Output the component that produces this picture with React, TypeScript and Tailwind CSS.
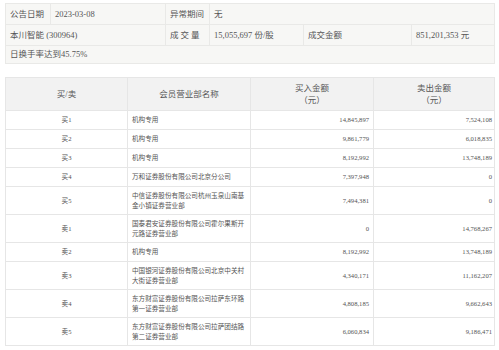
import React from 'react';

type Row = { side: string; name: string[]; buy: string; sell: string };

const rows: Row[] = [
  { side: '买1', name: ['机构专用'], buy: '14,845,897', sell: '7,524,108' },
  { side: '买2', name: ['机构专用'], buy: '9,861,779', sell: '6,018,835' },
  { side: '买3', name: ['机构专用'], buy: '8,192,992', sell: '13,748,189' },
  { side: '买4', name: ['万和证券股份有限公司北京分公司'], buy: '7,397,948', sell: '0' },
  { side: '买5', name: ['中信证券股份有限公司杭州玉泉山南基', '金小镇证券营业部'], buy: '7,494,381', sell: '0' },
  { side: '卖1', name: ['国泰君安证券股份有限公司霍尔果斯开', '元路证券营业部'], buy: '0', sell: '14,768,267' },
  { side: '卖2', name: ['机构专用'], buy: '8,192,992', sell: '13,748,189' },
  { side: '卖3', name: ['中国银河证券股份有限公司北京中关村', '大街证券营业部'], buy: '4,340,171', sell: '11,162,207' },
  { side: '卖4', name: ['东方财富证券股份有限公司拉萨东环路', '第一证券营业部'], buy: '4,808,185', sell: '9,662,643' },
  { side: '卖5', name: ['东方财富证券股份有限公司拉萨团结路', '第二证券营业部'], buy: '6,060,834', sell: '9,186,471' },
];

const font = { fontFamily: '"Liberation Serif", "Noto Sans CJK SC", serif' };

export default function App() {
  const top = 'border border-[#e9e9e7] px-[4px] text-left align-middle';
  return (
    <div className="w-[499px] h-[350px] bg-white overflow-hidden pt-[3px] px-[5px] text-[#555]" style={font}>
      <table className="table-fixed border-collapse w-[489px] bg-[#f7f7f5] text-[8.5px]">
        <colgroup>
          <col className="w-[45px]" />
          <col className="w-[115px]" />
          <col className="w-[44px]" />
          <col className="w-[94px]" />
          <col className="w-[108px]" />
          <col className="w-[83px]" />
        </colgroup>
        <tbody>
          <tr className="h-[21px]">
            <td className={top}>公告日期</td>
            <td className={top}>2023-03-08</td>
            <td className={top}>异常期间</td>
            <td className={top} colSpan={3}>无</td>
          </tr>
          <tr className="h-[21px]">
            <td className={top} colSpan={2}>本川智能 (300964)</td>
            <td className={`${top} tracking-[2px]`}>成交量</td>
            <td className={`${top} whitespace-nowrap`}>15,055,697 份/股</td>
            <td className={top}>成交金额</td>
            <td className={`${top} whitespace-nowrap`}>851,201,353 元</td>
          </tr>
          <tr className="h-[18px]">
            <td className={top} colSpan={6}>日换手率达到45.75%</td>
          </tr>
        </tbody>
      </table>

      <table className="table-fixed border-collapse w-[489px] mt-[13px] text-[6.6px] text-[#555]">
        <colgroup>
          <col className="w-[122px]" />
          <col className="w-[123px]" />
          <col className="w-[123px]" />
          <col className="w-[121px]" />
        </colgroup>
        <thead>
          <tr className="h-[33px] bg-[#f2f2f2] text-[8.5px] leading-[12px] text-[#555]">
            <th className="border border-[#e6e6e6] font-normal">买/卖</th>
            <th className="border border-[#e6e6e6] font-normal">会员营业部名称</th>
            <th className="border border-[#e6e6e6] font-normal">
              <div>买入金额</div>
              <div>（元）</div>
            </th>
            <th className="border border-[#e6e6e6] font-normal">
              <div>卖出金额</div>
              <div>（元）</div>
            </th>
          </tr>
        </thead>
        <tbody>
          {rows.map(r => (
            <tr key={r.side} className={r.name.length > 1 ? 'h-[28px]' : 'h-[19px]'}>
              <td className="border border-[#e6e6e6] text-center">{r.side}</td>
              <td className="border border-[#e6e6e6] px-[4px] leading-[10px]">
                {r.name.map(n => (
                  <div key={n} className="whitespace-nowrap">{n}</div>
                ))}
              </td>
              <td className="border border-[#e6e6e6] px-[4px] text-right">{r.buy}</td>
              <td className="border border-[#e6e6e6] px-[2px] text-right">{r.sell}</td>
            </tr>
          ))}
        </tbody>
      </table>
    </div>
  );
}
